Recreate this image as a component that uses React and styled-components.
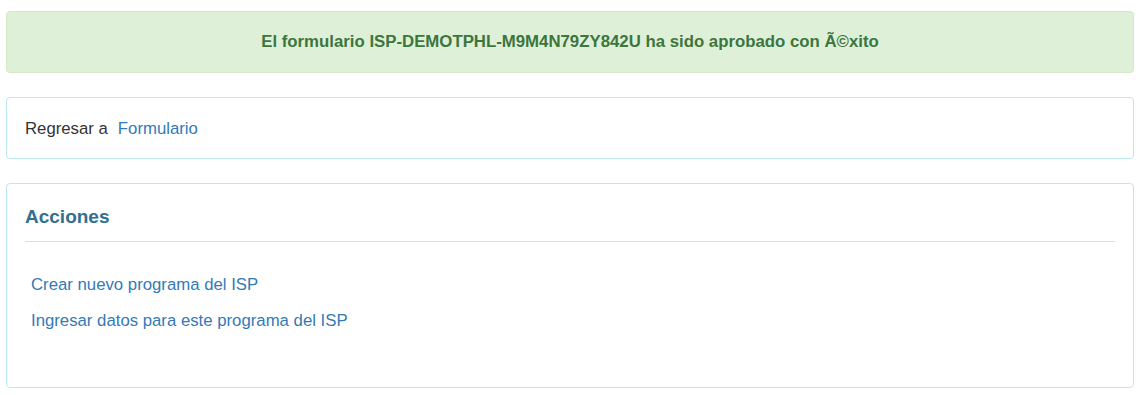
import React from "react";
import styled, { createGlobalStyle } from "styled-components";

const Global = createGlobalStyle`
  html, body { margin: 0; padding: 0; background: #fff; }
  body {
    font-family: "Liberation Sans", Arial, sans-serif;
    font-size: 16.75px;
    color: #333;
  }
  * { box-sizing: border-box; }
`;

const Page = styled.div`
  display: flex;
  flex-direction: column;
  gap: 24px;
  padding: 11px 8px 0 6px;
`;

const Alert = styled.div`
  background: #dff0d8;
  border: 1px solid #d6e9c6;
  border-radius: 4px;
  color: #3c763d;
  padding: 20px;
  line-height: 20px;
  text-align: center;
  font-weight: bold;
  font-size: 16.8px;
`;

const Panel = styled.div`
  border: 1px solid #bce8f1;
  border-radius: 4px;
  background: #fff;
  padding: ${(p) => p.$padding || "18px"};
`;

const BackRow = styled.div`
  display: flex;
  align-items: center;
  line-height: 24px;
`;

const Link = styled.a`
  color: #337ab7;
  text-decoration: none;
  margin-left: ${(p) => p.$indent || "0"};
`;

const Heading = styled.h3`
  margin: 0;
  font-size: 19px;
  font-weight: bold;
  color: #31708f;
  line-height: 29px;
  padding-bottom: 10px;
  border-bottom: 1px solid #bce8f1;
`;

const ActionList = styled.ul`
  list-style: none;
  margin: 31px 0 36px;
  padding: 0 0 0 6px;
  display: flex;
  flex-direction: column;
  gap: 12px;
`;

const ActionItem = styled.li`
  line-height: 24px;
`;

export default function App() {
  return (
    <>
      <Global />
      <Page>
        <Alert>
          El formulario ISP-DEMOTPHL-M9M4N79ZY842U ha sido aprobado con Ã©xito
        </Alert>
        <Panel $padding="19px 18px 17px">
          <BackRow>
            Regresar a<Link href="#" $indent="10px">Formulario</Link>
          </BackRow>
        </Panel>
        <Panel>
          <Heading>Acciones</Heading>
          <ActionList>
            <ActionItem>
              <Link href="#">Crear nuevo programa del ISP</Link>
            </ActionItem>
            <ActionItem>
              <Link href="#">Ingresar datos para este programa del ISP</Link>
            </ActionItem>
          </ActionList>
        </Panel>
      </Page>
    </>
  );
}
